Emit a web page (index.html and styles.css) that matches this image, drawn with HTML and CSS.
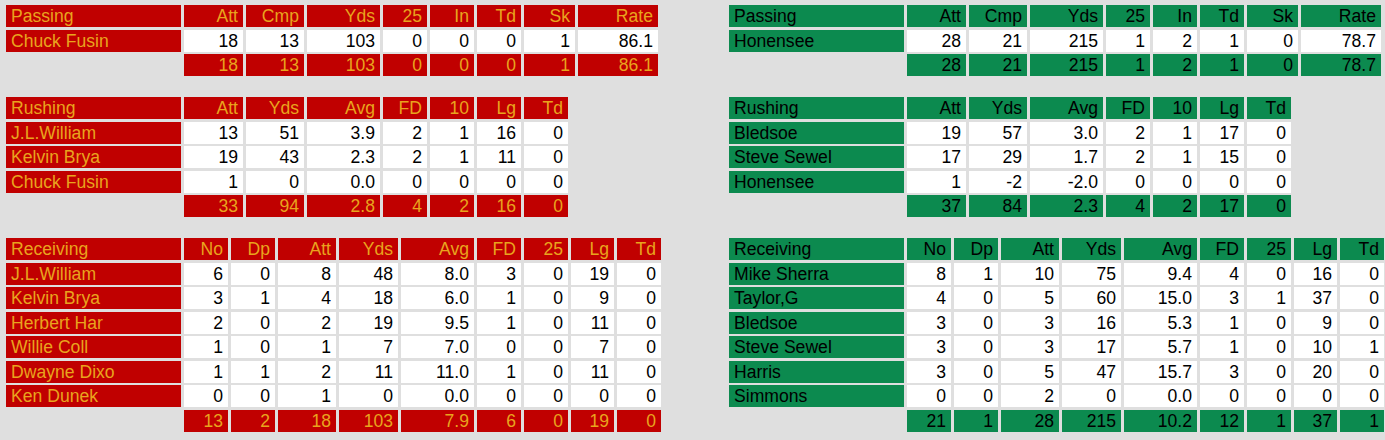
FILE: index.html
```html
<!DOCTYPE html>
<html>
<head>
<meta charset="utf-8">
<title>Box Score</title>
<link rel="stylesheet" href="styles.css">
</head>
<body>
<div class="page">
  <div class="panel home">
    <div class="stat passing">
      <div class="row"><div class="c nm">Passing</div><div class="c hd">Att</div><div class="c hd">Cmp</div><div class="c hd">Yds</div><div class="c hd">25</div><div class="c hd">In</div><div class="c hd">Td</div><div class="c hd">Sk</div><div class="c hd">Rate</div></div>
      <div class="row"><div class="c nm">Chuck Fusin</div><div class="c v">18</div><div class="c v">13</div><div class="c v">103</div><div class="c v">0</div><div class="c v">0</div><div class="c v">0</div><div class="c v">1</div><div class="c v">86.1</div></div>
      <div class="row"><div class="c blank"></div><div class="c hd">18</div><div class="c hd">13</div><div class="c hd">103</div><div class="c hd">0</div><div class="c hd">0</div><div class="c hd">0</div><div class="c hd">1</div><div class="c hd">86.1</div></div>
    </div>
    <div class="stat rushing">
      <div class="row"><div class="c nm">Rushing</div><div class="c hd">Att</div><div class="c hd">Yds</div><div class="c hd">Avg</div><div class="c hd">FD</div><div class="c hd">10</div><div class="c hd">Lg</div><div class="c hd">Td</div></div>
      <div class="row"><div class="c nm">J.L.William</div><div class="c v">13</div><div class="c v">51</div><div class="c v">3.9</div><div class="c v">2</div><div class="c v">1</div><div class="c v">16</div><div class="c v">0</div></div>
      <div class="row"><div class="c nm">Kelvin Brya</div><div class="c v">19</div><div class="c v">43</div><div class="c v">2.3</div><div class="c v">2</div><div class="c v">1</div><div class="c v">11</div><div class="c v">0</div></div>
      <div class="row"><div class="c nm">Chuck Fusin</div><div class="c v">1</div><div class="c v">0</div><div class="c v">0.0</div><div class="c v">0</div><div class="c v">0</div><div class="c v">0</div><div class="c v">0</div></div>
      <div class="row"><div class="c blank"></div><div class="c hd">33</div><div class="c hd">94</div><div class="c hd">2.8</div><div class="c hd">4</div><div class="c hd">2</div><div class="c hd">16</div><div class="c hd">0</div></div>
    </div>
    <div class="stat receiving">
      <div class="row"><div class="c nm">Receiving</div><div class="c hd">No</div><div class="c hd">Dp</div><div class="c hd">Att</div><div class="c hd">Yds</div><div class="c hd">Avg</div><div class="c hd">FD</div><div class="c hd">25</div><div class="c hd">Lg</div><div class="c hd">Td</div></div>
      <div class="row"><div class="c nm">J.L.William</div><div class="c v">6</div><div class="c v">0</div><div class="c v">8</div><div class="c v">48</div><div class="c v">8.0</div><div class="c v">3</div><div class="c v">0</div><div class="c v">19</div><div class="c v">0</div></div>
      <div class="row"><div class="c nm">Kelvin Brya</div><div class="c v">3</div><div class="c v">1</div><div class="c v">4</div><div class="c v">18</div><div class="c v">6.0</div><div class="c v">1</div><div class="c v">0</div><div class="c v">9</div><div class="c v">0</div></div>
      <div class="row"><div class="c nm">Herbert Har</div><div class="c v">2</div><div class="c v">0</div><div class="c v">2</div><div class="c v">19</div><div class="c v">9.5</div><div class="c v">1</div><div class="c v">0</div><div class="c v">11</div><div class="c v">0</div></div>
      <div class="row"><div class="c nm">Willie Coll</div><div class="c v">1</div><div class="c v">0</div><div class="c v">1</div><div class="c v">7</div><div class="c v">7.0</div><div class="c v">0</div><div class="c v">0</div><div class="c v">7</div><div class="c v">0</div></div>
      <div class="row"><div class="c nm">Dwayne Dixo</div><div class="c v">1</div><div class="c v">1</div><div class="c v">2</div><div class="c v">11</div><div class="c v">11.0</div><div class="c v">1</div><div class="c v">0</div><div class="c v">11</div><div class="c v">0</div></div>
      <div class="row"><div class="c nm">Ken Dunek</div><div class="c v">0</div><div class="c v">0</div><div class="c v">1</div><div class="c v">0</div><div class="c v">0.0</div><div class="c v">0</div><div class="c v">0</div><div class="c v">0</div><div class="c v">0</div></div>
      <div class="row"><div class="c blank"></div><div class="c hd">13</div><div class="c hd">2</div><div class="c hd">18</div><div class="c hd">103</div><div class="c hd">7.9</div><div class="c hd">6</div><div class="c hd">0</div><div class="c hd">19</div><div class="c hd">0</div></div>
    </div>
  </div>

  <div class="panel away">
    <div class="stat passing">
      <div class="row"><div class="c nm">Passing</div><div class="c hd">Att</div><div class="c hd">Cmp</div><div class="c hd">Yds</div><div class="c hd">25</div><div class="c hd">In</div><div class="c hd">Td</div><div class="c hd">Sk</div><div class="c hd">Rate</div></div>
      <div class="row"><div class="c nm">Honensee</div><div class="c v">28</div><div class="c v">21</div><div class="c v">215</div><div class="c v">1</div><div class="c v">2</div><div class="c v">1</div><div class="c v">0</div><div class="c v">78.7</div></div>
      <div class="row"><div class="c blank"></div><div class="c hd">28</div><div class="c hd">21</div><div class="c hd">215</div><div class="c hd">1</div><div class="c hd">2</div><div class="c hd">1</div><div class="c hd">0</div><div class="c hd">78.7</div></div>
    </div>
    <div class="stat rushing">
      <div class="row"><div class="c nm">Rushing</div><div class="c hd">Att</div><div class="c hd">Yds</div><div class="c hd">Avg</div><div class="c hd">FD</div><div class="c hd">10</div><div class="c hd">Lg</div><div class="c hd">Td</div></div>
      <div class="row"><div class="c nm">Bledsoe</div><div class="c v">19</div><div class="c v">57</div><div class="c v">3.0</div><div class="c v">2</div><div class="c v">1</div><div class="c v">17</div><div class="c v">0</div></div>
      <div class="row"><div class="c nm">Steve Sewel</div><div class="c v">17</div><div class="c v">29</div><div class="c v">1.7</div><div class="c v">2</div><div class="c v">1</div><div class="c v">15</div><div class="c v">0</div></div>
      <div class="row"><div class="c nm">Honensee</div><div class="c v">1</div><div class="c v">-2</div><div class="c v">-2.0</div><div class="c v">0</div><div class="c v">0</div><div class="c v">0</div><div class="c v">0</div></div>
      <div class="row"><div class="c blank"></div><div class="c hd">37</div><div class="c hd">84</div><div class="c hd">2.3</div><div class="c hd">4</div><div class="c hd">2</div><div class="c hd">17</div><div class="c hd">0</div></div>
    </div>
    <div class="stat receiving">
      <div class="row"><div class="c nm">Receiving</div><div class="c hd">No</div><div class="c hd">Dp</div><div class="c hd">Att</div><div class="c hd">Yds</div><div class="c hd">Avg</div><div class="c hd">FD</div><div class="c hd">25</div><div class="c hd">Lg</div><div class="c hd">Td</div></div>
      <div class="row"><div class="c nm">Mike Sherra</div><div class="c v">8</div><div class="c v">1</div><div class="c v">10</div><div class="c v">75</div><div class="c v">9.4</div><div class="c v">4</div><div class="c v">0</div><div class="c v">16</div><div class="c v">0</div></div>
      <div class="row"><div class="c nm">Taylor,G</div><div class="c v">4</div><div class="c v">0</div><div class="c v">5</div><div class="c v">60</div><div class="c v">15.0</div><div class="c v">3</div><div class="c v">1</div><div class="c v">37</div><div class="c v">0</div></div>
      <div class="row"><div class="c nm">Bledsoe</div><div class="c v">3</div><div class="c v">0</div><div class="c v">3</div><div class="c v">16</div><div class="c v">5.3</div><div class="c v">1</div><div class="c v">0</div><div class="c v">9</div><div class="c v">0</div></div>
      <div class="row"><div class="c nm">Steve Sewel</div><div class="c v">3</div><div class="c v">0</div><div class="c v">3</div><div class="c v">17</div><div class="c v">5.7</div><div class="c v">1</div><div class="c v">0</div><div class="c v">10</div><div class="c v">1</div></div>
      <div class="row"><div class="c nm">Harris</div><div class="c v">3</div><div class="c v">0</div><div class="c v">5</div><div class="c v">47</div><div class="c v">15.7</div><div class="c v">3</div><div class="c v">0</div><div class="c v">20</div><div class="c v">0</div></div>
      <div class="row"><div class="c nm">Simmons</div><div class="c v">0</div><div class="c v">0</div><div class="c v">2</div><div class="c v">0</div><div class="c v">0.0</div><div class="c v">0</div><div class="c v">0</div><div class="c v">0</div><div class="c v">0</div></div>
      <div class="row"><div class="c blank"></div><div class="c hd">21</div><div class="c hd">1</div><div class="c hd">28</div><div class="c hd">215</div><div class="c hd">10.2</div><div class="c hd">12</div><div class="c hd">1</div><div class="c hd">37</div><div class="c hd">1</div></div>
    </div>
  </div>
</div>
</body>
</html>
```

FILE: styles.css
```css
html, body {
  margin: 0;
  padding: 0;
  background: #dfdfdf;
}

body {
  font-family: "Liberation Sans", Arial, sans-serif;
  font-size: 17.6px;
  width: 1385px;
  height: 440px;
  overflow: hidden;
}

.page {
  display: flex;
  align-items: flex-start;
  gap: 68px;
  padding: 5px 0 0 6px;
}

.panel {
  display: flex;
  flex-direction: column;
  gap: 21px;
  width: 655px;
}

.stat {
  display: grid;
  column-gap: 3px;
  row-gap: 2.5px;
  grid-auto-rows: 22px;
  justify-content: start;
}

.passing {
  grid-template-columns: 175px 59px 58px 73px 44px 44px 44px 51px 80px;
}

.rushing {
  grid-template-columns: 175px 59px 58px 73px 44px 44px 44px 44px;
}

.receiving {
  grid-template-columns: 175px 44px 44px 58px 59px 73px 44px 44px 43px 44px;
}

.row {
  display: contents;
}

.c {
  line-height: 22px;
  height: 22px;
  padding: 0 5px 0 5px;
  white-space: nowrap;
  overflow: hidden;
  text-align: right;
}

.c.nm {
  text-align: left;
  padding-left: 5px;
}

.c.v {
  background: #ffffff;
  color: #000000;
}

.c.blank {
  background: transparent;
}

.home .nm,
.home .hd {
  background: #c00000;
  color: #e9a41e;
}

.away .nm,
.away .hd {
  background: #0c8a4f;
  color: #000000;
}
```
